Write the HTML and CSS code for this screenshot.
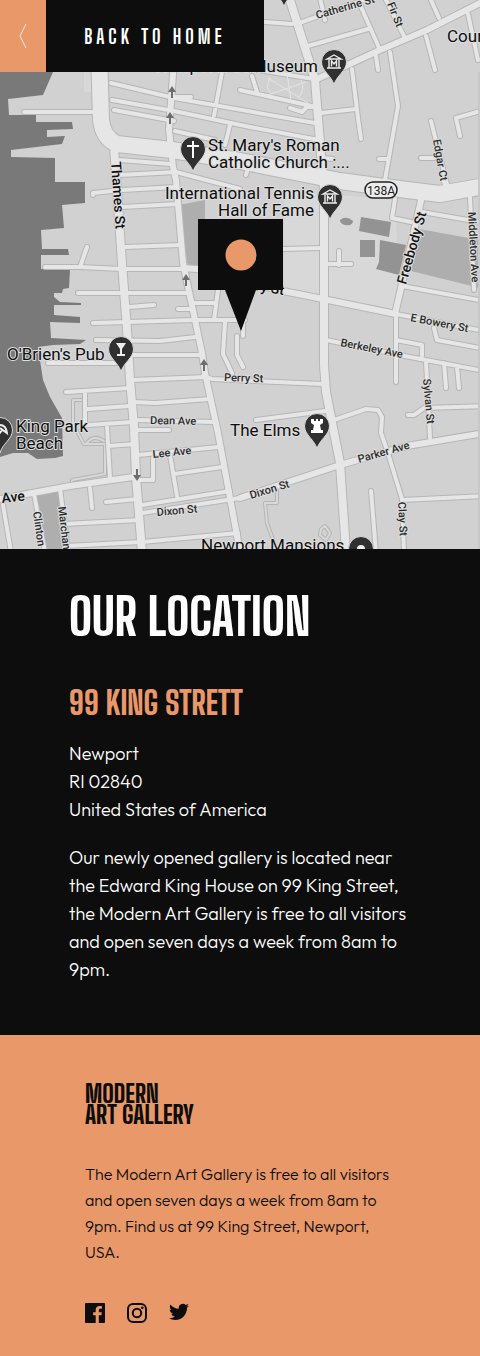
FILE: index.html
```html
<!DOCTYPE html>
<html lang="en">
<head>
<meta charset="utf-8">
<meta name="viewport" content="width=device-width, initial-scale=1">
<title>Modern Art Gallery – Our Location</title>
<link rel="stylesheet" href="styles.css">
</head>
<body>
<header class="map">
  <svg class="map-art" viewBox="0 0 480 549" role="img" aria-label="Street map of Newport">
    <defs>
      <path id="r-wide" d="M99 50L101 120Q103 138 117 144L172 150L240 161L340 181L407 190L440 194L480 187"/>
      <path id="r-main" d="M114 146L117 190L122 263L127 330L130 380L134 427L136 477L142 552M290 0L315 80L320 143L324 190L324 365L326 392L340 463L346 552"/>
      <path id="r-mid" d="M174 60L169 130L173 167L176 180L183 263L202 353L205 373L218 433L240 552M315 80L380 50L427 30L484 1M183 268L197 269L283 291L323 299L396 314M422 196L412 240L395 314M0 499L27 494L70 486L133 477M240 498L340 465L407 446L484 433"/>
      <path id="r-small" d="
        M24 112H96 M111 83L174 98L315 123 M112 100L174 111L250 127L319 140 M114 110L174 121 M174 97H191
        M222 72L214 116 M230 125L225 145 M175 131L215 140 M120 160L170 164 M120 175L176 172L240 189
        M93 195V193L122 190L176 187 M122 207L178 204 M125 247L180 245
        M45 267H80L122 269H184 M80 267L87 247 M78 293H188 M129 307L154 305 M178 309H190 M93 323L195 320H245
        M96 340L160 341L195 337 M126 355H200 M48 363H130 M192 303L216 303 M218 290L214 320
        M225 322L223 354L232 373 M237 336V355L243 367 M203 376L212 379L323 384
        M132 380L207 377 M66 392L130 388 M85 392V426 M88 409L130 406 M134 402L155 403L210 399
        M136 420L214 422 M88 425L133 422 M136 430H169 M138 455L218 447 M140 480H153V458 M170 455L177 496
        M174 474L222 467 M142 505L230 491 M142 513L240 498 M106 502L138 499 M90 488L92 508
        M34 494L45 552 M60 488L68 552 M64 524L140 520 M66 546L142 542L238 533 M3 505L11 552
        M107 426L110 478 M135 444L108 446
        M265 22L292 24L302 22L370 -2 M308 46L368 29 M320 -2L325 20 M358 0L380 50 M386 0L404 36 M431 0L439 18
        M376 56L378 70 M390 52L398 106L385 180 M426 36L435 70 M468 14L478 60
        M352 69L358 118L361 139 M321 113L356 109 M252 76L257 92 M240 67L314 79 M240 90L316 107
        M290 108L302 112L307 107H315 M379 159H387 M431 121L448 188 M421 158H434 M460 136L456 118L484 110
        M322 158L333 159 M250 161L246 175 M395 199L392 218L411 222 M422 212L480 222 M443 180L449 194 M470 197L474 290
        M402 286L484 301 M396 314L484 331 M434 328L437 340L480 348 M283 249L321 248 M339 251V265 M329 264H351
        M326 340L410 357L484 371 M396 314V382 M396 340L422 345V356 M426 361L430 438 M444 363L446 388 M457 367L459 388
        M256 420L325 411 M334 420L366 409L378 410L382 417L381 433L387 450L402 499L404 552 M402 500L484 496
        M408 415H414L424 408L484 406 M371 491L376 552 M243 300V336"/>
    </defs>
    <rect width="480" height="549" fill="#d1d1d1"/>
    <path fill="#d8d8d8" d="M284 190L395 200L400 312L284 290zM84 72H108V92H84z"/>
    <path fill="#797979" d="M0 0H76L53 72L43 95L8 99L9 115H36V122H72L73 129L47 130V137L65 136L62 144L11 150V157L55 158V182H85V203L62 205L64 228L41 230L42 249H68L69 255H41V269H70L69 288L63 289L62 293H54V297L60 302L81 303V305H54V315L80 317V323L50 322L51 338L86 340L80 344L53 345L38 347L43 380L50 397L62 418L63 456L55 458L37 459L28 453L13 453L0 457z"/>
    <path fill="#aeaeae" d="M179 205L205 200V268H188zM36 495L58 492L66 549H47zM419 229L480 240V288L411 271z"/>
    <path fill="#939393" d="M361 217L391 222L389 237L359 231zM360 240H375V257H360zM380 240L406 245L399 275L376 269L379 262zM340 220Q346 215 353 221Q353 226 345 225Q340 224 340 220z"/>
    <g class="lane">
      <path class="lane-edge" d="M82 400H73V424L84 444H105V474L72 480V485M87 443Q93 434 104 441M277 488V503H265L267 523L275 545M321 529L325 526L330 533L326 540L320 535z"/>
      <path class="lane-fill" d="M82 400H73V424L84 444H105V474L72 480V485M87 443Q93 434 104 441M277 488V503H265L267 523L275 545M321 529L325 526L330 533L326 540L320 535z"/>
    </g>
    <g class="casing">
      <use href="#r-small" stroke-width="6"/><use href="#r-mid" stroke-width="8"/><use href="#r-main" stroke-width="10"/><use href="#r-wide" stroke-width="18"/>
    </g>
    <g class="road">
      <use href="#r-small" stroke-width="4"/><use href="#r-mid" stroke-width="6"/><use href="#r-main" stroke-width="8"/><use href="#r-wide" stroke-width="16"/>
    </g>
    <path class="garden" d="M268 78L311 105M265 96L306 82M287 74L291 100M270 78Q264 88 272 94M301 80Q306 90 298 98"/>
    <g fill="#6d6d6d">
      <path id="arrow" d="M172 86L168 92H171V98H173V92H176z"/>
      <use href="#arrow" x="-2" y="26"/><use href="#arrow" x="14" y="188"/><use href="#arrow" x="32" y="273"/>
      <path d="M137 481L133 475H136V469H138V475H141z"/>
    </g>
    <path fill="#c8c8c8" d="M478 72H480V549H478z"/>

    <g class="place">
      <text x="318" y="72" text-anchor="end">Newport Art Museum</text>
      <text x="208" y="151">St. Mary's Roman</text>
      <text x="208" y="168">Catholic Church :...</text>
      <text x="314" y="199" text-anchor="end">International Tennis</text>
      <text x="314" y="216" text-anchor="end">Hall of Fame</text>
      <text x="7" y="360">O'Brien's Pub</text>
      <text x="16" y="432">King Park</text>
      <text x="16" y="449">Beach</text>
      <text x="230" y="436">The Elms</text>
      <text x="201" y="551">Newport Mansions</text>
      <text x="447" y="42">Court</text>
    </g>
    <g class="street">
      <text transform="translate(317 19) rotate(-16)">Catherine St</text>
      <text transform="translate(387 4) rotate(68)">Fir St</text>
      <text transform="translate(433 140) rotate(80)">Edgar Ct</text>
      <text transform="translate(468 212) rotate(87)">Middleton Ave</text>
      <text transform="translate(410 321) rotate(11)">E Bowery St</text>
      <text transform="translate(340 346) rotate(11)">Berkeley Ave</text>
      <text transform="translate(224 381) rotate(2)">Perry St</text>
      <text transform="translate(150 424) rotate(1)">Dean Ave</text>
      <text transform="translate(153 458) rotate(-6)">Lee Ave</text>
      <text transform="translate(157 516) rotate(-5)">Dixon St</text>
      <text transform="translate(251 499) rotate(-17)">Dixon St</text>
      <text transform="translate(359 463) rotate(-16)">Parker Ave</text>
      <text transform="translate(423 379) rotate(85)">Sylvan St</text>
      <text transform="translate(398 502) rotate(87)">Clay St</text>
      <text transform="translate(33 512) rotate(82)">Clinton St</text>
      <text transform="translate(58 507) rotate(83)">Marchant St</text>
    </g>
    <g class="street street-major">
      <text transform="translate(111 162) rotate(86)">Thames St</text>
      <text transform="translate(406 285) rotate(-74)">Freebody St</text>
      <text transform="translate(2 503) rotate(-6)">Ave</text>
      <text transform="translate(221 284) rotate(10)">Bowery St</text>
    </g>
    <rect x="365" y="182" width="32" height="16" rx="8" fill="#ededed" stroke="#222" stroke-width="1.5"/>
    <text class="shield" x="381" y="195" text-anchor="middle">138A</text>

    <defs>
      <path id="pin" d="M0 23C-2 14 -12.500 9 -12.500 0A12.500 12.500 0 0 1 12.500 0C12.500 9 2 14 0 23z"/>
      <g id="museum" fill="none" stroke="#eee" stroke-width="1.4"><path d="M-7 -3L0 -7L7 -3zM-5 -2V6M5 -2V6M-7 6H7M-2.500 4.500V-1L0 2L2.500 -1V4.500"/></g>
    </defs>
    <g fill="#303030" stroke="#d9d9d9" stroke-width="1">
      <use href="#pin" x="334" y="62"/><use href="#pin" x="193" y="149"/><use href="#pin" x="330" y="197"/>
      <use href="#pin" x="121" y="349"/><use href="#pin" x="317" y="426"/><use href="#pin" x="361" y="549"/>
      <use href="#pin" x="0" y="430"/><use href="#pin" x="284" y="-16"/>
    </g>
    <use href="#museum" x="334" y="62"/><use href="#museum" x="330" y="197"/>
    <path fill="none" stroke="#fff" stroke-width="2" d="M193 141V158M187 146H199"/>
    <path fill="#eee" d="M116 343H126L122 349V354H125V356H117V354H120V349z"/>
    <path fill="#fff" d="M311 419H314V421H316V419H318V421H320V419H323V423L320 425L321 430H323V433H311V430H313L314 425L311 423z"/>
    <path fill="none" stroke="#eee" stroke-width="2" d="M0 425Q6 425 7 433L0 428M3 429L-1 434"/>
    <circle cx="361" cy="549" r="4" fill="#eee"/>

    <path fill="#0d0d0d" d="M198 219H283V290H256L241 331L225 290H198z"/>
    <circle cx="241" cy="255" r="15.5" fill="#e99869"/>
  </svg>
  <a class="back" href="#home">
    <span class="back-arrow"><svg width="8" height="24" viewBox="0 0 8 24" aria-hidden="true"><path d="M7 0L1 12L7 24" fill="none" stroke="#fff" stroke-opacity=".8"/></svg></span>
    <span class="back-label">Back to home</span>
  </a>
</header>
<main class="location">
  <h1>Our location</h1>
  <h2>99 King Strett</h2>
  <address>Newport<br>RI 02840<br>United States of America</address>
  <p>Our newly opened gallery is located near the Edward King House on 99 King Street, the Modern Art Gallery is free to all visitors and open seven days a week from 8am to 9pm.</p>
</main>
<footer class="footer">
  <div class="logo">Modern<br>Art Gallery</div>
  <p>The Modern Art Gallery is free to all visitors and open seven days a week from 8am to 9pm. Find us at 99 King Street, Newport, USA.</p>
  <nav class="social" aria-label="Social media">
    <a href="#facebook" aria-label="Facebook"><svg viewBox="0 0 20 20"><path d="M18.9 0H1.1C.5 0 0 .5 0 1.1v17.8c0 .6.5 1.1 1.1 1.1h9.6v-7.7H8.1v-3h2.6V7c0-2.6 1.6-4 3.9-4 1.1 0 2 .1 2.3.1v2.7h-1.6c-1.3 0-1.5.6-1.5 1.5v2h3l-.4 3h-2.6V20h5.1c.6 0 1.1-.5 1.1-1.1V1.1C20 .5 19.5 0 18.9 0z"/></svg></a>
    <a href="#instagram" aria-label="Instagram"><svg viewBox="0 0 20 20"><rect x="1" y="1" width="18" height="18" rx="5" class="line"/><circle cx="10" cy="10" r="4.2" class="line"/><circle cx="15.3" cy="4.7" r="1.3"/></svg></a>
    <a href="#twitter" aria-label="Twitter"><svg viewBox="0 0 20 20"><path d="M20 2.8c-.7.3-1.5.5-2.4.6.9-.5 1.5-1.3 1.8-2.3-.8.5-1.7.8-2.6 1A4.1 4.1 0 0 0 9.8 5.8C6.4 5.7 3.4 4 1.4 1.5c-1.1 1.9-.6 4.3 1.3 5.5-.7 0-1.3-.2-1.9-.5 0 2 1.4 3.7 3.3 4.1-.6.2-1.2.2-1.9.1.5 1.6 2 2.8 3.8 2.8A8.2 8.2 0 0 1 0 15.2a11.6 11.6 0 0 0 6.3 1.8c7.5 0 11.7-6.3 11.7-11.7v-.5c.8-.6 1.5-1.3 2-2z"/></svg></a>
  </nav>
</footer>
</body>
</html>
```
FILE: styles.css
```css
* { box-sizing: border-box; }

body {
  margin: 0;
  background: #0d0d0d;
  font-family: Outfit, Lato, sans-serif;
  font-weight: 300;
  color: #fff;
}

h1, h2, p, address { margin: 0; }

.map { position: relative; overflow: hidden; }
.map-art { display: block; width: 100%; height: auto; }
.casing, .road, .lane, .garden { fill: none; stroke-linejoin: round; stroke-linecap: round; }
.casing { stroke: #b6b6b6; }
.road { stroke: #e6e6e6; }
.lane-edge { stroke: #b5b5b5; stroke-width: 4px; }
.lane-fill { stroke: #d8d8d8; stroke-width: 2px; }
.garden { stroke: #e4e4e4; stroke-width: 1px; }

.place, .street {
  font-family: Roboto, sans-serif;
  font-weight: 400;
  fill: #0d0d0d;
  stroke: #dedede;
  stroke-width: 2px;
  stroke-linejoin: round;
  paint-order: stroke;
}
.place { font-size: 17px; }
.street { font-size: 11px; font-weight: 500; fill: #2c2c2c; }
.street-major { font-size: 14px; fill: #111; }
.shield { font-family: Roboto, sans-serif; font-size: 12px; font-weight: 400; fill: #222; }

.back {
  position: absolute;
  top: 0;
  left: 0;
  display: flex;
  height: 72px;
  color: #fff;
  text-decoration: none;
}
.back-arrow {
  display: flex;
  align-items: center;
  justify-content: center;
  width: 46px;
  background: #e99869;
}
.back-label {
  display: flex;
  align-items: center;
  justify-content: center;
  width: 218px;
  background: #0d0d0d;
}

.back-label, h1, h2, .logo {
  font-family: "Big Shoulders Display", "Roboto Condensed", "Liberation Sans Narrow", sans-serif;
  font-weight: 800;
  text-transform: uppercase;
}
.back-label { font-size: 20px; font-weight: 700; letter-spacing: 4px; }

.location { padding: 36px 69px 51px; }
h1 { font-size: 50px; line-height: 64px; }
h2 { margin-top: 32px; font-size: 32px; line-height: 44px; color: #e99869; }
address, .location p {
  font-size: 18px;
  font-style: normal;
  line-height: 28px;
}
address { margin-top: 15px; }
.location p { margin-top: 20px; }

.footer {
  padding: 48px 85px 33px;
  background: #e99869;
  color: #0d0d0d;
}
.logo { font-size: 25px; line-height: 21px; }
.footer p { margin-top: 36px; font-size: 16px; line-height: 26px; }
.social { display: flex; gap: 22px; margin-top: 38px; }
.social a { display: block; height: 20px; }
.social svg { display: block; width: 20px; height: 20px; fill: #0d0d0d; }
.social .line { fill: none; stroke: #0d0d0d; stroke-width: 2px; }
```
